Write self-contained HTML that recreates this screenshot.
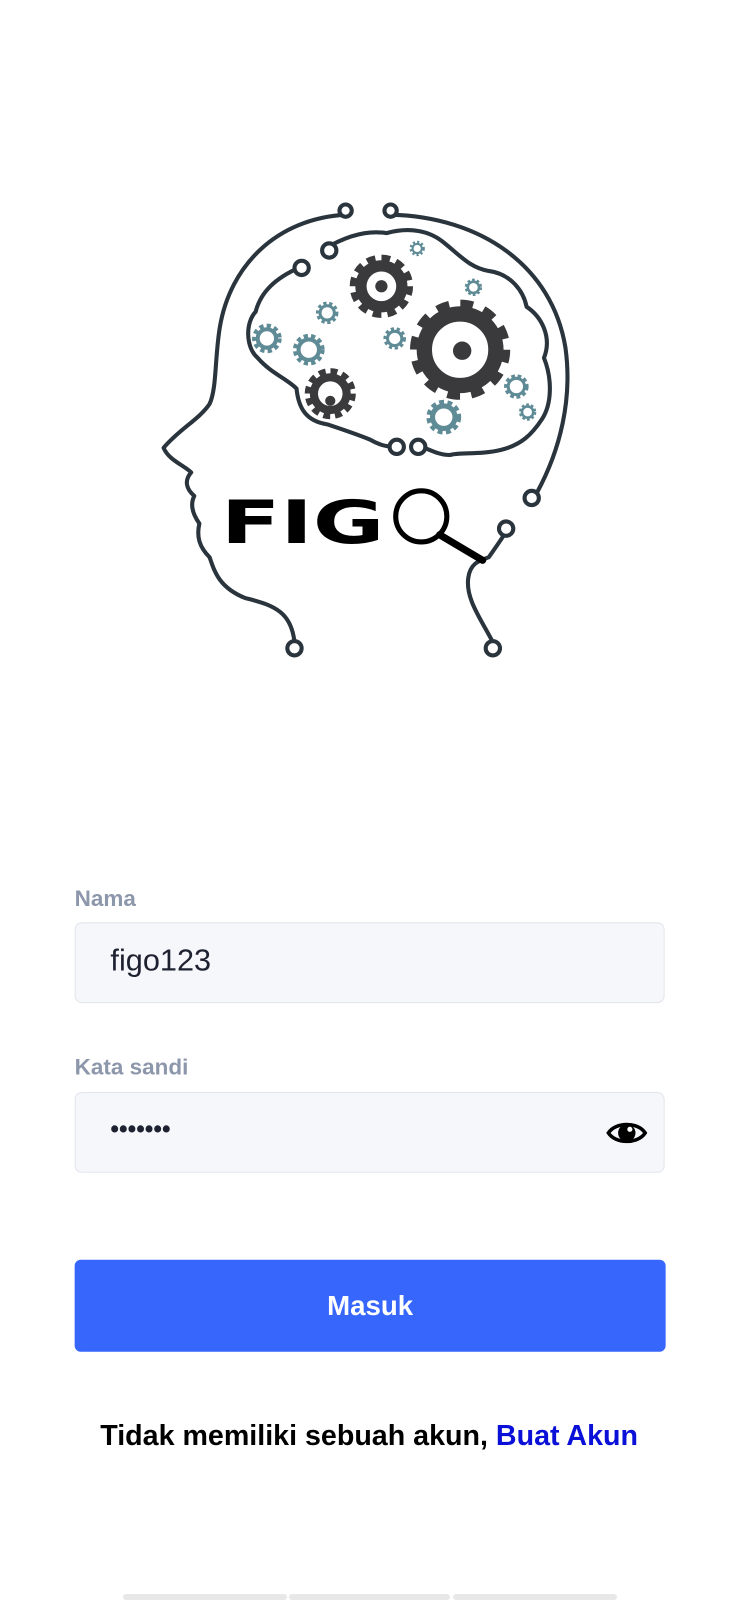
<!DOCTYPE html>
<html><head><meta charset="utf-8"><style>
html,body{margin:0;padding:0;background:#fff;width:738px;height:1600px;overflow:hidden;font-family:"Liberation Sans",sans-serif;position:relative}
#wrap{position:absolute;left:0;top:0;width:722px;height:1565px;transform:scale(1.0225);transform-origin:0 0}
.lbl{position:absolute;left:73px;font-size:22px;font-weight:bold;color:#8d97ab}
.inp{position:absolute;left:73px;width:577px;height:79px;background:#f6f7fb;border:1.5px solid #e2e5eb;border-radius:7px;box-sizing:border-box}
.btn{position:absolute;left:73px;top:1232px;width:578px;height:90px;background:#3766fd;border-radius:6px;color:#fff;font-weight:bold;font-size:27px;text-align:center;line-height:90px}
.bot{position:absolute;left:0;width:722px;top:1388px;text-align:center;font-weight:bold;font-size:28px;color:#000;white-space:nowrap}
.bar{position:absolute;top:1594px;height:6px;background:#e8e8e8;border-radius:3px}
</style></head><body>
<div id="wrap">
<svg style="position:absolute;left:0;top:0" width="722" height="700" viewBox="0 0 722 700">
<g fill="none" stroke="#2a343d" stroke-width="4" stroke-linecap="round" stroke-linejoin="round">
<path d="M382,210 C470,212 540,260 553,340 C560,390 548,440 525,482"/>
<path d="M338,210 C270,214 225,260 215,320 C210,350 212,380 205,395 C195,410 175,420 160,438 C165,450 180,455 187,462 C180,470 182,478 190,485 C185,495 190,505 195,512 C192,525 195,535 205,545 C210,560 215,575 240,585 C270,592 285,600 288,628"/>
<path d="M482,628 C470,605 455,585 458,565 C460,550 470,548 478,545 C485,535 490,528 495,520"/>
<path d="M292,262 C270,272 255,285 250,305 C240,315 240,340 252,350 C265,365 280,370 290,380 C292,400 300,412 320,415 C335,420 350,425 362,430 C372,436 380,437 388,437"/>
<path d="M318,243 C340,230 360,225 378,228 C400,222 420,225 435,238 C450,250 460,262 478,265 C500,268 512,285 515,300 C530,310 540,330 532,350 C540,370 540,395 530,410 C520,425 510,435 490,440 C470,445 450,442 440,445 C430,445 420,440 413,437"/>
</g>
<g fill="#fff" stroke="#2a343d" stroke-width="4">
<circle cx="338" cy="206" r="6"/><circle cx="382" cy="206" r="6"/>
<circle cx="322" cy="245" r="7"/><circle cx="295" cy="262" r="7"/>
<circle cx="388" cy="437" r="7"/><circle cx="409" cy="437" r="7"/>
<circle cx="520" cy="487" r="7"/><circle cx="495" cy="517" r="7"/>
<circle cx="288" cy="634" r="7"/><circle cx="482" cy="634" r="7"/>
</g>
<g fill="none" stroke="#3a3a3c">
<circle cx="373" cy="280" r="26" stroke-width="10" stroke-dasharray="8 5.6"/>
<circle cx="373" cy="280" r="20" stroke-width="11"/>
<circle cx="450" cy="342" r="43" stroke-width="12" stroke-dasharray="12 10.5"/>
<circle cx="450" cy="342" r="35" stroke-width="15"/>
<circle cx="323" cy="385" r="21" stroke-width="8" stroke-dasharray="6.5 4.5"/>
<circle cx="323" cy="385" r="16" stroke-width="8"/>
</g>
<g fill="#3a3a3c"><circle cx="373" cy="280" r="6"/><circle cx="452" cy="343" r="9"/><circle cx="323" cy="392" r="5"/></g>
<g fill="none" stroke="#5f8b96">
<circle cx="261" cy="331" r="12" stroke-width="5" stroke-dasharray="4 3"/><circle cx="261" cy="331" r="9" stroke-width="4"/>
<circle cx="302" cy="342" r="13" stroke-width="5" stroke-dasharray="4 3"/><circle cx="302" cy="342" r="10" stroke-width="4"/>
<circle cx="320" cy="306" r="9" stroke-width="4" stroke-dasharray="3 2.5"/><circle cx="320" cy="306" r="7" stroke-width="3"/>
<circle cx="386" cy="331" r="9" stroke-width="4" stroke-dasharray="3 2.5"/><circle cx="386" cy="331" r="7" stroke-width="3"/>
<circle cx="434" cy="408" r="14" stroke-width="6" stroke-dasharray="4.5 3.2"/><circle cx="434" cy="408" r="11" stroke-width="5"/>
<circle cx="505" cy="378" r="10" stroke-width="4" stroke-dasharray="3.5 2.5"/><circle cx="505" cy="378" r="8" stroke-width="3"/>
<circle cx="516" cy="403" r="7" stroke-width="3" stroke-dasharray="2.5 2"/><circle cx="516" cy="403" r="5.5" stroke-width="2.5"/>
<circle cx="408" cy="243" r="6" stroke-width="3" stroke-dasharray="2 2"/><circle cx="408" cy="243" r="4.5" stroke-width="2"/>
<circle cx="463" cy="281" r="7" stroke-width="3" stroke-dasharray="2.5 2"/><circle cx="463" cy="281" r="5.5" stroke-width="2.5"/>
</g>
<text x="216" y="531" font-family="'DejaVu Sans',sans-serif" font-weight="bold" font-size="58" textLength="160" lengthAdjust="spacingAndGlyphs" fill="#000">FIG</text>
<circle cx="412" cy="505" r="25" fill="none" stroke="#000" stroke-width="5"/>
<line x1="430" y1="523" x2="472" y2="548" stroke="#000" stroke-width="7" stroke-linecap="round"/>
</svg>

<div class="lbl" style="top:866px">Nama</div>
<div class="inp" style="top:902px"><span style="position:absolute;left:34px;top:20px;font-size:30px;color:#1e2230">figo123</span></div>
<div class="lbl" style="top:1031px">Kata sandi</div>
<div class="inp" style="top:1068px"><span style="position:absolute;left:34px;top:22px;font-size:24px;font-weight:bold;color:#1e2230;letter-spacing:0px">•••••••</span>
<svg style="position:absolute;left:518px;top:24px" width="42" height="30" viewBox="0 0 42 30"><path d="M3,15 C10,4 32,4 39,15 C32,26 10,26 3,15 Z" fill="none" stroke="#000" stroke-width="3.5"/><circle cx="21" cy="15" r="8.5" fill="#000"/><circle cx="24" cy="11.5" r="2.5" fill="#fff"/></svg></div>
<div class="btn">Masuk</div>
<div class="bot">Tidak memiliki sebuah akun, <span style="color:#0a10d8">Buat Akun</span></div>
</div>
<div class="bar" style="left:123px;width:164px"></div>
<div class="bar" style="left:289px;width:161px"></div>
<div class="bar" style="left:453px;width:164px"></div>
</body></html>
